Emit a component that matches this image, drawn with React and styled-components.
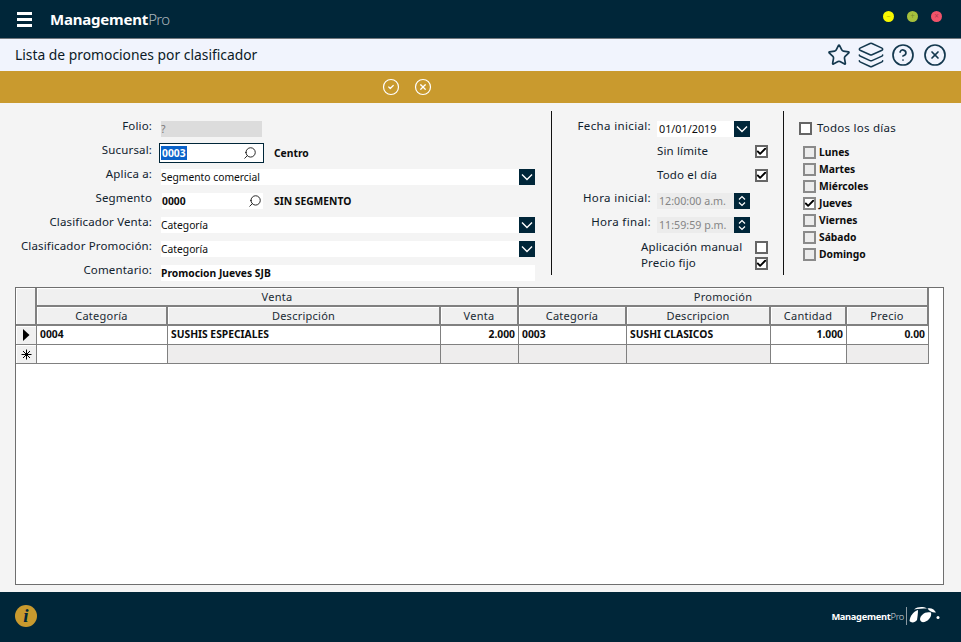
import React from 'react'
import styled, { createGlobalStyle } from 'styled-components'
import { Star, Layers, CircleHelp, CircleX, CircleCheck, Search, Check } from 'lucide-react'

const navy = '#002639'
const gold = '#c99a2e'
const uiFont = `'Noto Sans', 'Open Sans', sans-serif`

const Global = createGlobalStyle`
  html, body {
    margin: 0;
    padding: 0;
    background: #f4f4f4;
  }
  * {
    box-sizing: border-box;
  }
`

const Page = styled.div`
  width: 961px;
  height: 642px;
  display: flex;
  flex-direction: column;
  overflow: hidden;
  font-family: ${uiFont};
  font-size: 11.5px;
  color: #10222e;
`

const Header = styled.header`
  height: 39px;
  flex: none;
  display: flex;
  align-items: center;
  padding: 0 19px 1px 17px;
  background: ${navy};
  border-bottom: 1px solid #71777d;
`

const Burger = styled.div`
  width: 15px;
  height: 15px;
  margin: 1px 18px 0 0;
  display: flex;
  flex-direction: column;
  justify-content: space-between;

  span {
    display: block;
    height: 3px;
    background: #fff;
  }
`

const Brand = styled.div`
  flex: 1;
  font-size: 15px;
  font-weight: 700;
  color: #fff;
  letter-spacing: -0.2px;

  span {
    font-weight: 300;
    letter-spacing: -0.7px;
    color: #aab4ba;
  }
`

const Dots = styled.div`
  display: flex;
  gap: 13px;
  margin-bottom: 5px;
`

const Dot = styled.span`
  width: 11px;
  height: 11px;
  border-radius: 50%;
  background: ${(p) => p.$color};
  display: flex;
  align-items: center;
  justify-content: center;
  font-size: 8px;
  line-height: 1;
  color: rgba(0, 0, 0, 0.3);
`

const TitleBar = styled.div`
  height: 32px;
  flex: none;
  display: flex;
  align-items: center;
  justify-content: space-between;
  padding: 0 14px 0 15px;
  background: #f1f4fd;
`

const Title = styled.h1`
  margin: 0 0 1px;
  font-size: 13.85px;
  font-weight: 400;
  color: #0b1a26;
`

const TitleIcons = styled.div`
  display: flex;
  align-items: center;
  gap: 8px;
  color: #14384e;
`

const LayersIcon = styled(Layers)`
  margin: 0 -2px;
`

const ActionBar = styled.div`
  height: 32px;
  flex: none;
  display: flex;
  align-items: center;
  gap: 14px;
  padding-left: 382px;
  background: ${gold};
  color: #fff;
`

const Form = styled.div`
  height: 184px;
  flex: none;
  display: flex;
  align-items: flex-start;
  padding-top: 8px;
`

const LeftColumn = styled.div`
  width: 551px;
  height: 164px;
  padding: 10px 16px 0 0;
  display: flex;
  flex-direction: column;
  gap: 8px;
`

const MiddleColumn = styled.div`
  width: 233px;
  height: 164px;
  padding-top: 10px;
  border-left: 1px solid #111;
  border-right: 1px solid #111;
  display: flex;
  flex-direction: column;
`

const RightColumn = styled.div`
  flex: 1;
  padding: 11px 0 0 15px;
  display: flex;
  flex-direction: column;
`

const Row = styled.div`
  height: 16px;
  margin-top: ${(p) => p.$top || 0}px;
  display: flex;
  align-items: flex-start;
`

const Label = styled.label`
  width: ${(p) => p.$width}px;
  flex: none;
  margin-top: -1px;
  text-align: right;
  line-height: 12px;
  letter-spacing: ${(p) => p.$spacing || 0.15}px;
  white-space: nowrap;
`

const Field = styled.div`
  height: 16px;
  width: ${(p) => (p.$width ? `${p.$width}px` : 'auto')};
  flex: ${(p) => (p.$width ? 'none' : '1')};
  margin-left: ${(p) => p.$left || 9}px;
  padding: 0 0 0 ${(p) => p.$pad ?? 0}px;
  display: flex;
  align-items: center;
  justify-content: space-between;
  background: ${(p) => p.$bg || '#fff'};
  color: ${(p) => p.$color || '#0c0c0c'};
  font-size: ${(p) => p.$size || 10.3}px;
  font-weight: ${(p) => p.$weight || 400};
  white-space: nowrap;
`

const FocusField = styled(Field)`
  height: 20px;
  width: 105px;
  flex: none;
  margin: -2px 0 0 7px;
  padding: 0 6px 0 1px;
  border: 1px solid ${navy};
  font-weight: 700;

  mark {
    background: #0a62c9;
    color: #fff;
    padding: 0 1px;
  }
`

const DateValue = styled.span`
  margin-bottom: 2px;
`

const SideText = styled.span`
  margin-left: ${(p) => p.$left}px;
  font-size: 10.3px;
  font-weight: 700;
  line-height: 16px;
  color: #0c0c0c;
`

const DropButton = styled.span`
  width: 16px;
  height: 16px;
  flex: none;
  display: flex;
  align-items: center;
  justify-content: center;
  background: ${navy};
  color: #fff;
`

const CheckRow = styled(Row)`
  padding-left: ${(p) => p.$left}px;
`

const CheckText = styled.span`
  width: ${(p) => p.$width}px;
  flex: none;
  line-height: 12px;
  letter-spacing: 0.15px;
`

const Box = styled.span`
  width: 13px;
  height: 13px;
  flex: none;
  display: flex;
  align-items: center;
  justify-content: center;
  border: 2px solid ${(p) => (p.$soft ? '#8a8a8a' : '#666')};
  background: ${(p) => (p.$soft && !p.$checked ? '#ececec' : '#fff')};
  color: #000;

  svg {
    flex: none;
  }
`

const AllDays = styled.div`
  display: flex;
  align-items: flex-start;
  gap: 5px;
  height: 13px;
  margin-bottom: 11px;
  line-height: 11px;
  letter-spacing: 0.25px;
`

const DayList = styled.div`
  display: flex;
  flex-direction: column;
  padding-left: 4px;
`

const Day = styled.div`
  height: 17px;
  display: flex;
  align-items: flex-start;
  gap: 3px;
  font-size: 10.3px;
  font-weight: 700;
  line-height: 13px;
  color: #0c0c0c;
`

const GridWrap = styled.section`
  flex: 1;
  margin: 0 17px 7px 15px;
  background: #fff;
  border: 1px solid #6f6f6f;
`

const Grid = styled.div`
  display: grid;
  width: 913px;
  grid-template-columns: 21px 131px 273px 78px 108px 144px 76px 82px;
  grid-auto-rows: 19px;
`

const HeadCell = styled.div`
  grid-column: span ${(p) => p.$span || 1};
  grid-row: span ${(p) => p.$rows || 1};
  display: flex;
  align-items: center;
  justify-content: center;
  background: #f0f0f0;
  border-right: 2px solid #808080;
  border-bottom: 2px solid #808080;
  box-shadow: inset 1px 1px 0 #fff;
  letter-spacing: 0.25px;
  font-size: 11px;
  color: #1a2a33;
`

const RowMark = styled(HeadCell)`
  border-right-width: 1px;
  border-bottom-width: 1px;
  color: #000;
`

const Cell = styled.div`
  display: flex;
  align-items: center;
  justify-content: ${(p) => (p.$right ? 'flex-end' : 'flex-start')};
  padding: 0 3px 2px 3px;
  background: ${(p) => (p.$muted ? '#eeeded' : '#fff')};
  border-right: 1px solid #808080;
  border-bottom: 1px solid #808080;
  font-size: 10.3px;
  font-weight: 700;
  color: #0c0c0c;
  white-space: nowrap;
`

const Footer = styled.footer`
  height: 50px;
  flex: none;
  display: flex;
  align-items: center;
  justify-content: space-between;
  padding: 0 21px 2px 15px;
  background: ${navy};
`

const InfoBadge = styled.span`
  width: 22px;
  height: 22px;
  border-radius: 50%;
  background: ${gold};
  color: ${navy};
  display: flex;
  align-items: center;
  justify-content: center;
  font-family: 'Liberation Serif', serif;
  font-size: 19px;
  font-weight: 700;
  font-style: italic;
`

const FootLogo = styled.div`
  display: flex;
  align-items: center;
  gap: 2px;
  font-size: 9.3px;
  font-weight: 700;
  letter-spacing: -0.3px;
  color: #fff;

  em {
    font-style: normal;
    font-weight: 300;
    color: #d5dade;
  }

  i {
    display: block;
    width: 1px;
    height: 18px;
    background: #8b99a2;
  }
`

const Swoosh = () => (
  <svg width="31" height="18" viewBox="0 0 31 18" fill="#fff">
    <path d="M0.5 14 C1 9 4 5 9 3 C9 6 8.5 10 8 13 C6 16 2 16 0.5 14Z" />
    <path d="M11 12 C11.5 8 16 4 22 5.5 C23 9 20 13.5 15.5 15 C13 15.5 11 14.5 11 12Z" />
    <path d="M5 2.5 C9 -0.5 14 -0.5 18 1.5 C14 1.5 9 1.5 5 2.5Z" />
    <path d="M18.5 1.5 C22 0.5 25 2 27 5.5 C24 6 20.5 4.5 18.5 1.5Z" />
    <circle cx="29" cy="10.5" r="1.5" />
  </svg>
)

const NewRowMark = () => (
  <svg width="11" height="11" viewBox="0 0 11 11" stroke="#000" strokeWidth="1">
    <path d="M5.5 0.5V10.5M0.5 5.5H10.5M2 2L9 9M9 2L2 9" />
  </svg>
)

const CurrentRowMark = () => (
  <svg width="8" height="12" viewBox="0 0 8 12" fill="#000">
    <path d="M1 0L7.5 6L1 12Z" />
  </svg>
)

const Dropdown = () => (
  <DropButton>
    <svg width="16" height="16" viewBox="0 0 16 16" fill="none" stroke="#fff" strokeWidth="1.4">
      <path d="M3 5.5L8 10.5L13 5.5" />
    </svg>
  </DropButton>
)

const Stepper = () => (
  <DropButton>
    <svg width="16" height="16" viewBox="0 0 16 16" fill="none" stroke="#fff" strokeWidth="1.2">
      <path d="M5 6.5L8 3.5L11 6.5M5 9.5L8 12.5L11 9.5" />
    </svg>
  </DropButton>
)

const Checkbox = ({ checked, soft }) => (
  <Box $checked={checked} $soft={soft}>
    {checked && <Check size={11} strokeWidth={4} />}
  </Box>
)

const days = [
  { name: 'Lunes' },
  { name: 'Martes' },
  { name: 'Miércoles' },
  { name: 'Jueves', checked: true },
  { name: 'Viernes' },
  { name: 'Sábado' },
  { name: 'Domingo' },
]

const columns = ['Categoría', 'Descripción', 'Venta', 'Categoría', 'Descripcion', 'Cantidad', 'Precio']

const rowOne = [
  { text: '0004' },
  { text: 'SUSHIS ESPECIALES' },
  { text: '2.000', right: true },
  { text: '0003' },
  { text: 'SUSHI CLASICOS' },
  { text: '1.000', right: true },
  { text: '0.00', right: true },
]

const rowTwoMuted = [false, true, true, true, true, false, true]

export default function App() {
  return (
    <Page>
      <Global />
      <Header>
        <Burger>
          <span />
          <span />
          <span />
        </Burger>
        <Brand>
          Management<span>Pro</span>
        </Brand>
        <Dots>
          <Dot $color="#f7f700">−</Dot>
          <Dot $color="#a6c03c">+</Dot>
          <Dot $color="#f0536a">×</Dot>
        </Dots>
      </Header>

      <TitleBar>
        <Title>Lista de promociones por clasificador</Title>
        <TitleIcons>
          <Star size={24} strokeWidth={1.7} />
          <LayersIcon size={28} strokeWidth={1.3} />
          <CircleHelp size={24} strokeWidth={1.7} />
          <CircleX size={24} strokeWidth={1.7} />
        </TitleIcons>
      </TitleBar>

      <ActionBar>
        <CircleCheck size={18} strokeWidth={1.6} />
        <CircleX size={18} strokeWidth={1.6} />
      </ActionBar>

      <Form>
        <LeftColumn>
          <Row>
            <Label $width={152}>Folio:</Label>
            <Field $width={101} $bg="#dcdcdc" $color="#777">?</Field>
          </Row>
          <Row>
            <Label $width={152}>Sucursal:</Label>
            <FocusField>
              <mark>0003</mark>
              <Search size={14} strokeWidth={1.5} style={{ transform: 'scaleX(-1)' }} />
            </FocusField>
            <SideText $left={10}>Centro</SideText>
          </Row>
          <Row>
            <Label $width={152}>Aplica a:</Label>
            <Field>
              Segmento comercial
              <Dropdown />
            </Field>
          </Row>
          <Row>
            <Label $width={152}>Segmento</Label>
            <Field $width={101} $left={10} $weight={700}>
              0000
              <Search size={14} strokeWidth={1.5} style={{ transform: 'scaleX(-1)', marginRight: 1 }} />
            </Field>
            <SideText $left={11}>SIN SEGMENTO</SideText>
          </Row>
          <Row>
            <Label $width={152}>Clasificador Venta:</Label>
            <Field>
              Categoría
              <Dropdown />
            </Field>
          </Row>
          <Row>
            <Label $width={152}>Clasificador Promoción:</Label>
            <Field>
              Categoría
              <Dropdown />
            </Field>
          </Row>
          <Row>
            <Label $width={152}>Comentario:</Label>
            <Field $weight={700}>Promocion Jueves SJB</Field>
          </Row>
        </LeftColumn>

        <MiddleColumn>
          <Row>
            <Label $width={99} $spacing={0.35}>Fecha inicial:</Label>
            <Field $width={77} $left={6} $pad={2} $size={10.8}>
              <DateValue>01/01/2019</DateValue>
            </Field>
            <Dropdown />
          </Row>
          <CheckRow $left={105} $top={8}>
            <CheckText $width={98}>Sin límite</CheckText>
            <Checkbox checked />
          </CheckRow>
          <CheckRow $left={105} $top={8}>
            <CheckText $width={98}>Todo el día</CheckText>
            <Checkbox checked />
          </CheckRow>
          <Row $top={8}>
            <Label $width={99} $spacing={0.35}>Hora inicial:</Label>
            <Field $width={77} $left={6} $pad={2} $bg="#ececec" $color="#858585" $size={10.7}>12:00:00 a.m.</Field>
            <Stepper />
          </Row>
          <Row $top={8}>
            <Label $width={99} $spacing={0.35}>Hora final:</Label>
            <Field $width={77} $left={6} $pad={2} $bg="#ececec" $color="#858585" $size={10.7}>11:59:59 p.m.</Field>
            <Stepper />
          </Row>
          <CheckRow $left={89} $top={8}>
            <CheckText $width={114}>Aplicación manual</CheckText>
            <Checkbox />
          </CheckRow>
          <CheckRow $left={89}>
            <CheckText $width={114}>Precio fijo</CheckText>
            <Checkbox checked />
          </CheckRow>
        </MiddleColumn>

        <RightColumn>
          <AllDays>
            <Checkbox />
            Todos los días
          </AllDays>
          <DayList>
            {days.map((day) => (
              <Day key={day.name}>
                <Checkbox checked={day.checked} soft />
                {day.name}
              </Day>
            ))}
          </DayList>
        </RightColumn>
      </Form>

      <GridWrap>
        <Grid>
          <HeadCell $rows={2} />
          <HeadCell $span={3}>Venta</HeadCell>
          <HeadCell $span={4}>Promoción</HeadCell>
          {columns.map((name, i) => (
            <HeadCell key={i}>{name}</HeadCell>
          ))}

          <RowMark>
            <CurrentRowMark />
          </RowMark>
          {rowOne.map((cell, i) => (
            <Cell key={i} $right={cell.right}>
              {cell.text}
            </Cell>
          ))}

          <RowMark>
            <NewRowMark />
          </RowMark>
          {rowTwoMuted.map((muted, i) => (
            <Cell key={i} $muted={muted} />
          ))}
        </Grid>
      </GridWrap>

      <Footer>
        <InfoBadge>i</InfoBadge>
        <FootLogo>
          <span>
            Management<em>Pro</em>
          </span>
          <i />
          <Swoosh />
        </FootLogo>
      </Footer>
    </Page>
  )
}
